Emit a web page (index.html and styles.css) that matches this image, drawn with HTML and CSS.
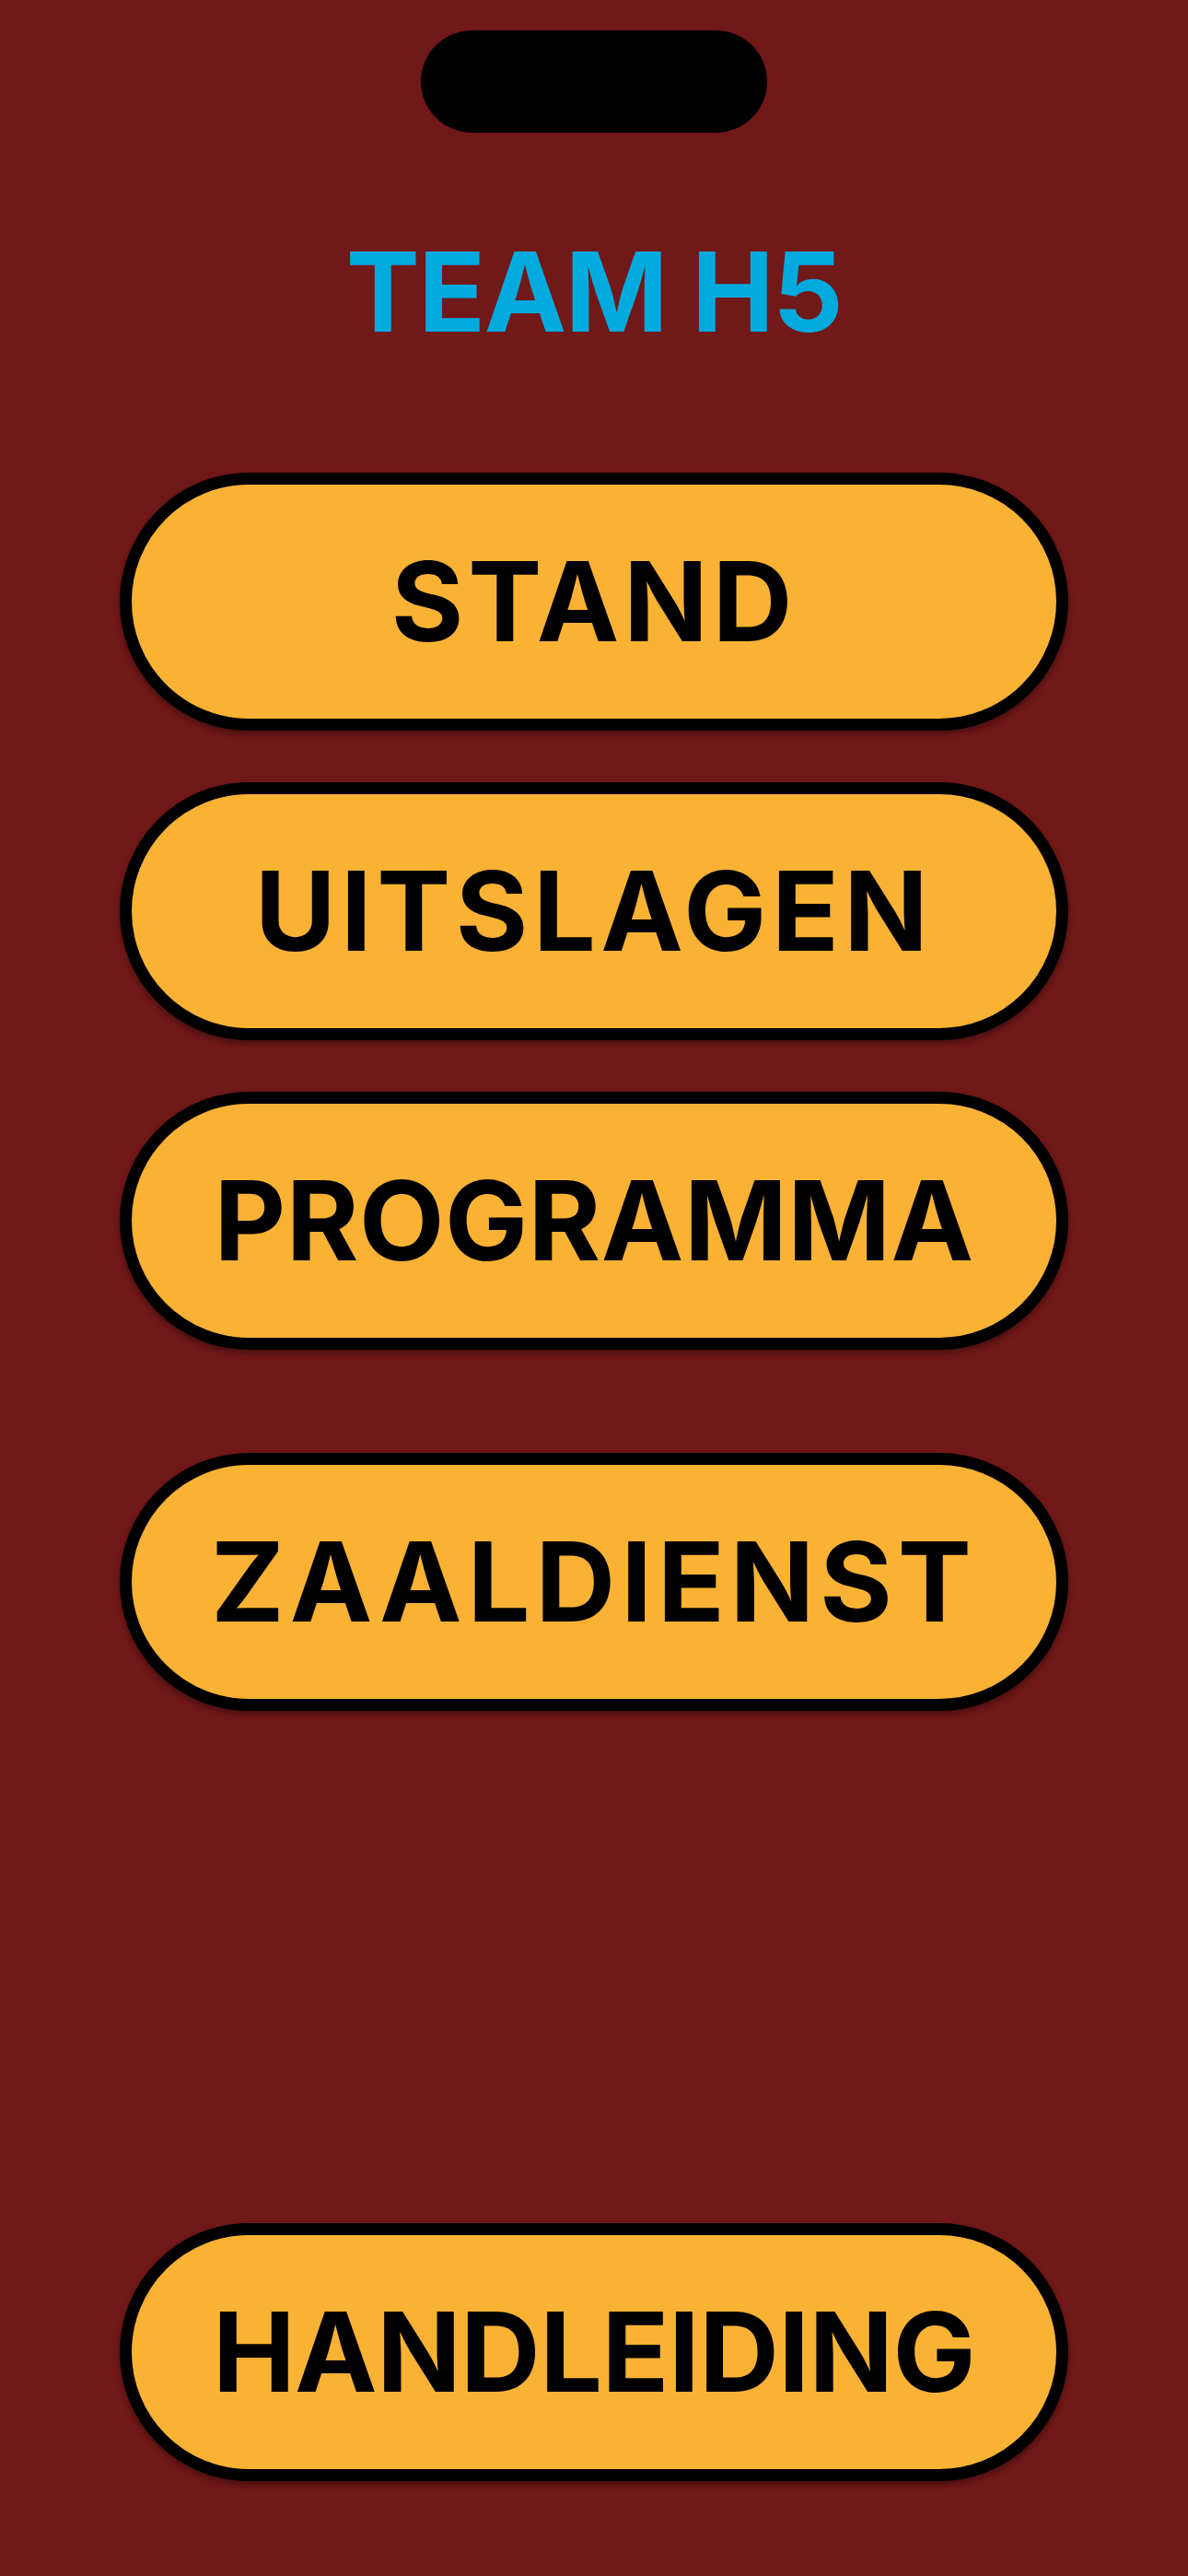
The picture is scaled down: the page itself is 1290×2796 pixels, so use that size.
FILE: index.html
```html
<!DOCTYPE html>
<html lang="nl">
<head>
<meta charset="utf-8">
<title>Team H5</title>
<link rel="stylesheet" href="styles.css">
</head>
<body>
<div class="screen">
  <div class="island"></div>
  <h1 class="title">TEAM H5</h1>
  <nav class="menu">
    <a class="btn btn-stand" href="#">STAND</a>
    <a class="btn btn-uitslagen" href="#">UITSLAGEN</a>
    <a class="btn btn-programma" href="#">PROGRAMMA</a>
    <a class="btn btn-zaaldienst" href="#">ZAALDIENST</a>
    <a class="btn btn-handleiding" href="#">HANDLEIDING</a>
  </nav>
</div>
</body>
</html>
```
FILE: styles.css
```css
html, body {
  margin: 0;
  padding: 0;
  background: #711818;
}

.screen {
  position: relative;
  box-sizing: border-box;
  width: 1290px;
  height: 2796px;
  padding: 257px 0 103px;
  display: flex;
  flex-direction: column;
  align-items: center;
  background: #711818;
  font-family: Inter, "Liberation Sans", sans-serif;
}

.island {
  position: absolute;
  top: 33px;
  left: 457px;
  width: 376px;
  height: 111px;
  border-radius: 56px;
  background: #000;
}

.title {
  margin: 0;
  font-size: 120px;
  line-height: 120px;
  font-weight: 700;
  color: #00AADE;
  letter-spacing: -1.5px;
}

.menu {
  margin-top: 136px;
  flex: 1;
  width: 1030px;
  display: flex;
  flex-direction: column;
  gap: 56px;
}

.btn {
  box-sizing: border-box;
  height: 280px;
  border: 13px solid #000;
  border-radius: 140px;
  background: #F9B234;
  box-shadow: 0 4px 6px rgba(0, 0, 0, 0.35);
  display: flex;
  align-items: center;
  justify-content: center;
  color: #000;
  text-decoration: none;
  font-size: 120px;
  font-weight: 700;
  letter-spacing: 2px;
  line-height: 1;
}

.btn-stand { letter-spacing: 5px; }
.btn-uitslagen { letter-spacing: 5.5px; }
.btn-programma { letter-spacing: 0.5px; }

.btn-zaaldienst {
  margin-top: 56px;
  letter-spacing: 6px;
}

.btn-handleiding {
  margin-top: auto;
  letter-spacing: -0.5px;
}
```
